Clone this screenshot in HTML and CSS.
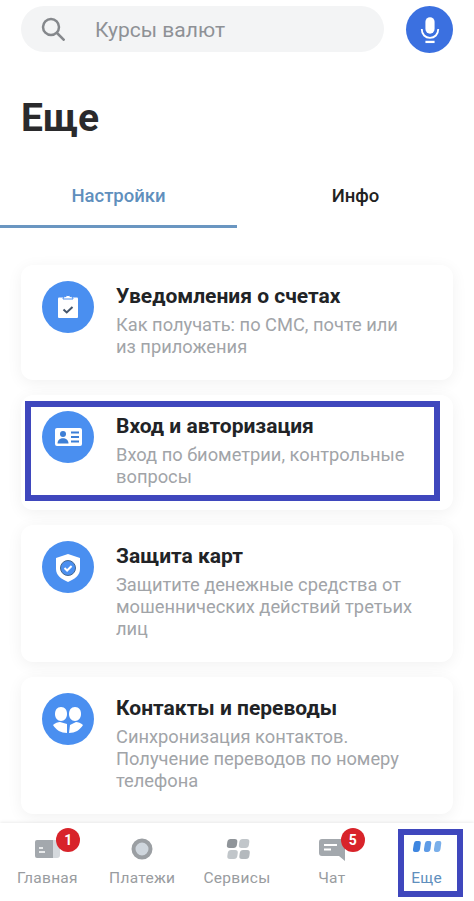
FILE: index.html
```html
<html lang="ru">
<head>
    <meta charset="UTF-8">
    <meta name="viewport" content="width=device-width, initial-scale=1.0">
    <title>Еще</title>
    <link rel="stylesheet" href="styles.css">
</head>
<body>
    <div class="top">
        <div class="search">
            <svg class="search-icon" viewBox="0 0 24 24"><circle cx="10" cy="10" r="8"/><path d="M16 16l7.500 7.500"/></svg>
            <span>Курсы валют</span>
        </div>
        <div class="mic">
            <svg viewBox="0 0 24 30"><rect x="7" y="1" width="10" height="18" rx="5" fill="#fff"/><path d="M3 14c0 6 4 9.500 9 9.500s9-3.500 9-9.500" fill="none" stroke="#fff" stroke-width="2"/><path d="M7 28h10" stroke="#fff" stroke-width="2.500"/></svg>
        </div>
    </div>

    <h1 class="title">Еще</h1>

    <div class="tabs">
        <div class="tab active">Настройки</div>
        <div class="tab">Инфо</div>
    </div>

    <div class="cards">
        <div class="card">
            <div class="round">
                <svg viewBox="0 0 52 52">
                    <path d="M17 16.500h18a1 1 0 0 1 1 1V36a1 1 0 0 1-1 1H17a1 1 0 0 1-1-1V17.500a1 1 0 0 1 1-1z" fill="#fff"/>
                    <path d="M21 18c0-2 1.500-2.500 3-2.500 0-1.500 4-1.500 4 0 1.500 0 3 .5 3 2.500z" fill="#fff" stroke="#4a8ff0"/>
                    <path d="M21.500 28.500l3.200 3 5.800-5.500" fill="none" stroke="#44566c" stroke-width="2"/>
                </svg>
            </div>
            <div class="text">
                <div class="name">Уведомления о счетах</div>
                <div class="desc">Как получать: по СМС, почте или<br>из приложения</div>
            </div>
        </div>

        <div class="card boxed">
            <div class="round">
                <svg viewBox="0 0 52 52">
                    <rect x="13" y="17" width="27" height="18" rx="2" fill="#fff"/>
                    <circle cx="21" cy="23" r="3" fill="#3d7fd6"/>
                    <path d="M15.500 32.500c0-7 11-7 11 0z" fill="#3d7fd6"/>
                    <path d="M29 21.500h8M29 26h8M29 30.500h8" stroke="#3d7fd6" stroke-width="2"/>
                </svg>
            </div>
            <div class="text">
                <div class="name">Вход и авторизация</div>
                <div class="desc">Вход по биометрии, контрольные<br>вопросы</div>
            </div>
            <div class="highlight"></div>
        </div>

        <div class="card">
            <div class="round">
                <svg viewBox="0 0 52 52">
                    <path d="M26 13l12 4v11c0 6-5 10-12 13-7-3-12-7-12-13V17z" fill="#fff"/>
                    <circle cx="26" cy="27" r="7.500" fill="#4a8ff0" stroke="#44668c" stroke-width="1"/>
                    <path d="M22.500 27l2.600 2.500 4.500-4.500" fill="none" stroke="#fff" stroke-width="2"/>
                </svg>
            </div>
            <div class="text">
                <div class="name">Защита карт</div>
                <div class="desc">Защитите денежные средства от<br>мошеннических действий третьих<br>лиц</div>
            </div>
        </div>

        <div class="card">
            <div class="round">
                <svg viewBox="0 0 52 52">
                    <path d="M19 14c4 0 6 3 6 7s-2.500 7-6 7-6-3-6-7 2-7 6-7z" fill="#fff"/>
                    <path d="M33 14c4 0 6 3 6 7s-2.500 7-6 7-6-3-6-7 2-7 6-7z" fill="#fff"/>
                    <path d="M11 32c2-2 5-3 7-3l7 2v9c-6 0-11-3-14-8z" fill="#fff"/>
                    <path d="M41 32c-2-2-5-3-7-3l-6 3-1 8c6 0 11-3 14-8z" fill="#fff"/>
                </svg>
            </div>
            <div class="text">
                <div class="name">Контакты и переводы</div>
                <div class="desc">Синхронизация контактов.<br>Получение переводов по номеру<br>телефона</div>
            </div>
        </div>
    </div>

    <div class="nav">
        <div class="nav-item">
            <div class="nav-icon">
                <svg viewBox="0 0 30 24">
                    <rect x="14" y="3" width="14" height="18" rx="3" fill="#d5d9dd"/>
                    <path d="M5 3h16v18H5a2 2 0 0 1-2-2V5a2 2 0 0 1 2-2z" fill="#a3a8ad"/>
                    <path d="M7 11h4M7 15h6" stroke="#fff" stroke-width="1.500"/>
                </svg>
                <span class="badge">1</span>
            </div>
            <span>Главная</span>
        </div>
        <div class="nav-item">
            <div class="nav-icon">
                <svg viewBox="0 0 30 24"><circle cx="15" cy="12" r="8.500" fill="#cfd6dd" stroke="#9b9fa3" stroke-width="4"/></svg>
            </div>
            <span>Платежи</span>
        </div>
        <div class="nav-item">
            <div class="nav-icon">
                <svg viewBox="0 0 30 24">
                    <rect x="4" y="2" width="10" height="9" rx="3" fill="#8f9499" transform="skewX(-8) translate(2 0)"/>
                    <rect x="16" y="2" width="10" height="9" rx="3" fill="#c1c6ca" transform="skewX(-8) translate(2 0)"/>
                    <rect x="6" y="13" width="10" height="9" rx="3" fill="#c1c6ca" transform="skewX(-8) translate(2 0)"/>
                    <rect x="18" y="13" width="10" height="9" rx="3" fill="#b4b9bd" transform="skewX(-8) translate(2 0)"/>
                </svg>
            </div>
            <span>Сервисы</span>
        </div>
        <div class="nav-item">
            <div class="nav-icon">
                <svg viewBox="0 0 30 24">
                    <path d="M5 2h20a3 3 0 0 1 3 3v19l-6-5H5a3 3 0 0 1-3-3V5a3 3 0 0 1 3-3z" fill="#a3a8ad"/>
                    <path d="M7 8h13M7 12.500h7" stroke="#fff" stroke-width="2"/>
                </svg>
                <span class="badge">5</span>
            </div>
            <span>Чат</span>
        </div>
        <div class="nav-item current">
            <div class="nav-icon">
                <svg viewBox="0 0 30 24">
                    <path d="M4 4h3q2 0 1.800 2l-.8 6q-.5 3-3 3H3q-2.500 0-2-3l.8-5q.5-3 2.200-3z" fill="#3f86e0"/>
                    <path d="M15 4h2.500q2 0 1.800 2l-.8 6q-.5 3-3 3h-1.500q-2.500 0-2-3l.8-5q.5-3 2.200-3z" fill="#5e9be6"/>
                    <path d="M25.500 4h2q2 0 1.800 2l-.8 6q-.5 3-3 3H24q-2.500 0-2-3l.8-5q.5-3 2.700-3z" fill="#7aafea"/>
                </svg>
            </div>
            <span>Еще</span>
            <div class="highlight"></div>
        </div>
    </div>
</body>
</html>
```

FILE: styles.css
```css
html, body {
    height: 100%;
}

body {
    margin: 0;
    height: 901px;
    overflow: hidden;
    display: flex;
    flex-direction: column;
    background-color: white;
    color: #212326;
    font-family: Roboto, "Noto Sans", sans-serif;
}

.top {
    display: flex;
    justify-content: space-between;
    padding: 6px 21px 0 21px;
}

.search {
    width: 363px;
    height: 46px;
    display: flex;
    align-items: center;
    background-color: #f3f4f5;
    border-radius: 23px;
    color: #8e9196;
    font-size: 21px;
}

.search span {
    padding-top: 2px;
}

.search-icon {
    width: 24px;
    height: 24px;
    margin-left: 20px;
    margin-right: 30px;
    fill: none;
    stroke: #85888c;
    stroke-width: 2.500;
}

.mic {
    width: 47px;
    height: 47px;
    display: flex;
    align-items: center;
    justify-content: center;
    background-color: #3b70e0;
    border-radius: 50%;
}

.mic svg {
    width: 22px;
    height: 28px;
}

.title {
    margin: 43px 0 0 21px;
    font-size: 39px;
    line-height: 44px;
    font-weight: 700;
    color: #2a2a2c;
}

.tabs {
    display: flex;
    margin-top: 34px;
}

.tab {
    width: 237px;
    height: 54px;
    padding-top: 8px;
    box-sizing: border-box;
    text-align: center;
    line-height: 28px;
    font-size: 18.500px;
    font-weight: 500;
    color: #222;
}

.tab.active {
    color: #5f8fbd;
    border-bottom: 3px solid #6a96c1;
}

.cards {
    flex: 1;
    min-height: 0;
    display: flex;
    flex-direction: column;
    gap: 15px;
    padding: 37px 21px 0 21px;
    overflow: hidden;
}

.card {
    position: relative;
    flex: none;
    display: flex;
    gap: 22px;
    padding: 16px 21px 22px 21px;
    background-color: white;
    border-radius: 12px;
    box-shadow: 0 3px 16px rgba(0, 0, 0, 0.06);
}

.round {
    flex: none;
    width: 52px;
    height: 52px;
    background-color: #4a8ff0;
    border-radius: 50%;
}

.round svg {
    display: block;
    width: 52px;
    height: 52px;
}

.name {
    margin-top: 2px;
    font-size: 21px;
    line-height: 26px;
    font-weight: 700;
    color: #212326;
}

.desc {
    margin-top: 5px;
    font-size: 18.300px;
    line-height: 22px;
    color: #a1a4a8;
}

.highlight {
    position: absolute;
    border: 6px solid #3f47bd;
    box-sizing: border-box;
}

.boxed .highlight {
    left: 4px;
    top: 6px;
    width: 415px;
    height: 100px;
}

.nav {
    flex: none;
    height: 78px;
    display: flex;
    position: relative;
    background-color: white;
    box-shadow: 0 -1px 3px rgba(0, 0, 0, 0.08);
}

.nav-item {
    position: relative;
    flex: 1;
    display: flex;
    flex-direction: column;
    align-items: center;
    font-size: 15.500px;
    color: #999ca0;
    letter-spacing: 0.3px;
}

.nav-icon {
    position: relative;
    width: 30px;
    height: 24px;
    margin-top: 14px;
    margin-bottom: 8px;
}

.nav-icon svg {
    display: block;
    width: 30px;
    height: 24px;
}

.badge {
    position: absolute;
    left: 24px;
    top: -9px;
    width: 24px;
    height: 24px;
    background-color: #d8232a;
    border-radius: 50%;
    color: white;
    font-size: 14px;
    font-weight: 700;
    letter-spacing: 0;
    line-height: 24px;
    text-align: center;
}

.nav-item.current {
    color: #5f8fbd;
}

.current .highlight {
    left: 19px;
    top: 6px;
    width: 65px;
    height: 68px;
}
```
